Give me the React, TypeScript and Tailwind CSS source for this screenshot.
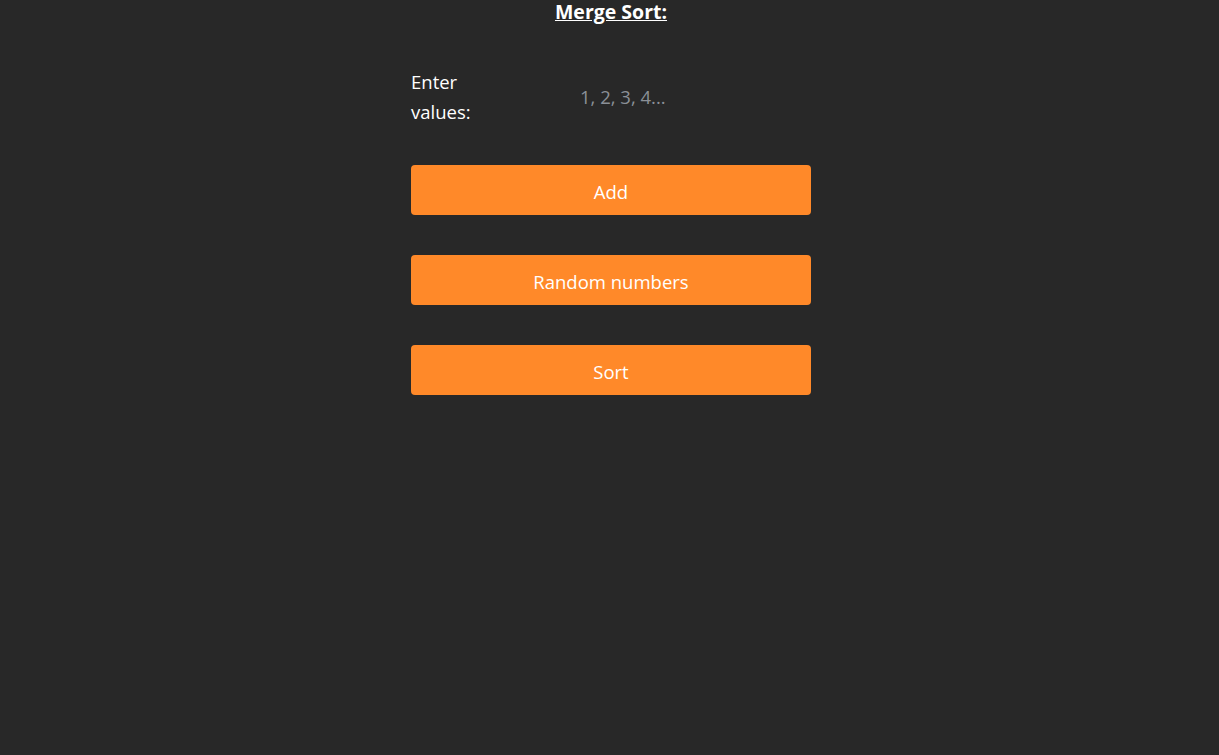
import React from "react";

export default function App() {
  return (
    <div
      className="min-h-[755px] w-full bg-[#282828] text-white flex flex-col items-center pl-[3px]"
      style={{ fontFamily: '"Open Sans", "Noto Sans", sans-serif' }}
    >
      <h1 className="text-[19.5px] leading-[24px] font-bold underline mt-[0px]">Merge Sort:</h1>
      <div className="w-[400px] mt-[43px] flex flex-col">
        <div className="flex items-center">
          <label className="w-[80px] shrink-0 text-[18.5px] leading-[30px]">Enter values:</label>
          <input
            className="flex-1 min-w-0 bg-transparent outline-none text-[18.5px] pl-[89px] placeholder-[#8b9097] text-white"
            placeholder="1, 2, 3, 4..."
          />
        </div>
        <div className="flex flex-col gap-[40px] mt-[38px]">
          <button className="h-[50px] w-full rounded-[4px] bg-[#ff8929] text-[18.5px] text-white pt-[3px]">Add</button>
          <button className="h-[50px] w-full rounded-[4px] bg-[#ff8929] text-[18.5px] text-white pt-[3px]">Random numbers</button>
          <button className="h-[50px] w-full rounded-[4px] bg-[#ff8929] text-[18.5px] text-white pt-[3px]">Sort</button>
        </div>
      </div>
    </div>
  );
}
